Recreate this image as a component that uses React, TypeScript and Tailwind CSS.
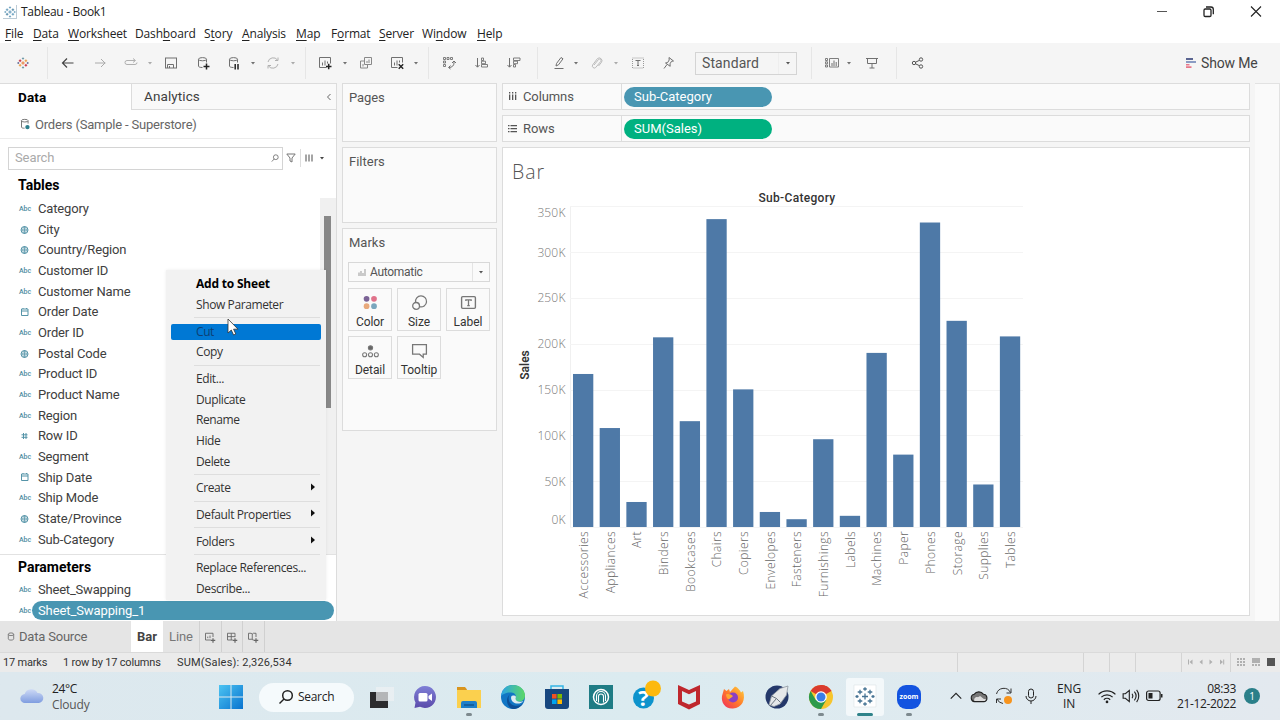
import type { ReactNode } from "react"
import { clsx } from "clsx"

const fields = [
  { type: "abc", name: "Category" },
  { type: "geo", name: "City" },
  { type: "geo", name: "Country/Region" },
  { type: "abc", name: "Customer ID" },
  { type: "abc", name: "Customer Name" },
  { type: "date", name: "Order Date" },
  { type: "abc", name: "Order ID" },
  { type: "geo", name: "Postal Code" },
  { type: "abc", name: "Product ID" },
  { type: "abc", name: "Product Name" },
  { type: "abc", name: "Region" },
  { type: "num", name: "Row ID" },
  { type: "abc", name: "Segment" },
  { type: "date", name: "Ship Date" },
  { type: "abc", name: "Ship Mode" },
  { type: "geo", name: "State/Province" },
  { type: "abc", name: "Sub-Category" },
]

// sales in thousands
const sales = [
  { name: "Accessories", value: 167 },
  { name: "Appliances", value: 108 },
  { name: "Art", value: 27.3 },
  { name: "Binders", value: 207 },
  { name: "Bookcases", value: 115.5 },
  { name: "Chairs", value: 336 },
  { name: "Copiers", value: 150.2 },
  { name: "Envelopes", value: 16.4 },
  { name: "Fasteners", value: 8.5 },
  { name: "Furnishings", value: 95.8 },
  { name: "Labels", value: 12.2 },
  { name: "Machines", value: 190 },
  { name: "Paper", value: 79 },
  { name: "Phones", value: 332.3 },
  { name: "Storage", value: 225 },
  { name: "Supplies", value: 46.4 },
  { name: "Tables", value: 208 },
]

interface MenuEntry {
  label: string
  bold?: boolean
  active?: boolean
  submenu?: boolean
  divider?: boolean
}

const contextMenu: MenuEntry[] = [
  { label: "Add to Sheet", bold: true },
  { label: "Show Parameter", divider: true },
  { label: "Cut", active: true },
  { label: "Copy", divider: true },
  { label: "Edit..." },
  { label: "Duplicate" },
  { label: "Rename" },
  { label: "Hide" },
  { label: "Delete", divider: true },
  { label: "Create", submenu: true, divider: true },
  { label: "Default Properties", submenu: true, divider: true },
  { label: "Folders", submenu: true, divider: true },
  { label: "Replace References..." },
  { label: "Describe..." },
]

const menuBar = [
  { pre: "", key: "F", post: "ile", width: "w-[28px]" },
  { pre: "", key: "D", post: "ata", width: "w-[35px]" },
  { pre: "", key: "W", post: "orksheet", width: "w-[67px]" },
  { pre: "Dash", key: "b", post: "oard", width: "w-[69px]" },
  { pre: "S", key: "t", post: "ory", width: "w-[38px]" },
  { pre: "", key: "A", post: "nalysis", width: "w-[54px]" },
  { pre: "", key: "M", post: "ap", width: "w-[35px]" },
  { pre: "F", key: "o", post: "rmat", width: "w-[48px]" },
  { pre: "", key: "S", post: "erver", width: "w-[43px]" },
  { pre: "Wi", key: "n", post: "dow", width: "w-[55px]" },
  { pre: "", key: "H", post: "elp", width: "w-[40px]" },
]

function Icon({ children, className }: { children: ReactNode; className?: string }) {
  return (
    <svg viewBox="0 0 16 16" fill="none" stroke="currentColor" className={clsx("shrink-0", className ?? "size-4")}>
      {children}
    </svg>
  )
}

function Caret({ className }: { className?: string }) {
  return (
    <svg viewBox="0 0 6 6" className={clsx("size-1.5 shrink-0", className)}>
      <path d="M1 2h4L3 4.4z" fill="currentColor" />
    </svg>
  )
}

function Separator({ className }: { className?: string }) {
  return <div className={clsx("w-px h-8 bg-[#e6e6e6] shrink-0", className)} />
}

const plus = (x: number, y: number, r: number) => `M${x - r} ${y}h${r * 2}M${x} ${y - r}v${r * 2}`

function TableauMark({ className, mono }: { className?: string; mono?: boolean }) {
  return (
    <svg viewBox="0 0 24 24" fill="none" strokeWidth={mono ? 1.7 : 1.9} className={clsx("shrink-0", className)}>
      <path d={plus(12, 12, 3.4)} stroke={mono ? "#4d8bb3" : "#e8762c"} />
      <path d={plus(6.2, 7.5, 2.6) + plus(17.8, 16.5, 2.6)} stroke={mono ? "#5a96b8" : "#c7243a"} />
      <path d={plus(17.8, 7.5, 2.6) + plus(6.2, 16.5, 2.6)} stroke={mono ? "#4680a0" : "#eb9a3c"} />
      <path d={plus(12, 3, 2.2) + plus(12, 21, 2.2)} stroke={mono ? "#6b9fbd" : "#7099a6"} />
      <path d={plus(2.6, 12, 1.8) + plus(21.4, 12, 1.8)} stroke={mono ? "#6b9fbd" : "#5b6591"} />
    </svg>
  )
}

function TitleBar() {
  return (
    <div className="flex items-center h-6 bg-white text-[#222] shrink-0">
      <div className="ml-[3px] size-[14px] border-r border-b border-[#bccbd6] flex items-center justify-center">
        <TableauMark mono className="size-3" />
      </div>
      <span className="ml-[4px] text-[12px] tracking-[-0.3px]">Tableau - Book1</span>
      <div className="ml-auto flex items-center gap-[31px] mr-[16px]">
        <Icon className="size-4 text-[#555]"><path d="M3 7.500h10" /></Icon>
        <Icon className="size-4 text-[#222]">
          <rect x="3" y="5" width="7" height="7.500" rx="1.200" strokeWidth="1.300" />
          <path d="M5 3h5a2.300 2.300 0 0 1 2.300 2.300v5" strokeWidth="1.300" />
        </Icon>
        <Icon className="size-4 text-[#222]"><path d="m3 2.500 10 10M13 2.500 3 12.500" strokeWidth="1.100" /></Icon>
      </div>
    </div>
  )
}

function MenuBar() {
  return (
    <div className="flex items-center h-[19px] pl-[5px] bg-white text-[12px] text-[#222] shrink-0 whitespace-nowrap">
      {menuBar.map((m) => (
        <span key={m.pre + m.key + m.post} className={clsx("tracking-[-0.15px]", m.width)}>
          {m.pre}
          <span className="underline underline-offset-2">{m.key}</span>
          {m.post}
        </span>
      ))}
    </div>
  )
}

function Toolbar() {
  return (
    <div className="flex items-center h-10 bg-[#f5f5f5] text-[#707070] pl-[15px] shrink-0">
      <TableauMark className="size-4 p-[2px]" />
      <Separator className="ml-4" />
      <Icon className="size-4 ml-3 text-[#444]"><path d="M2.500 8h11M7 3.500 2.500 8l4.500 4.500" strokeWidth="1.200" /></Icon>
      <Icon className="size-4 ml-4 text-[#aaa]"><path d="M3 8h10.500M9 4l4 4-4 4" /></Icon>
      <Icon className="size-4 ml-[15px] text-[#b0b0b0]"><path d="M12 9.500H4a2 2 0 0 1-2-2 2 2 0 0 1 2-2h8M10 3.500l2.500 2L10 7.500M12 9.500a2 2 0 0 0 2-2" /></Icon>
      <Caret className="ml-2 text-[#aaa]" />
      <Icon className="size-4 ml-[10px]">
        <rect x="2.500" y="3" width="11" height="10" />
        <path d="M4.500 13v-3.500h6V13M6.500 11v2" />
      </Icon>
      <Icon className="size-4 ml-4">
        <path d="M3.500 4.500v6.500c0 1 1.500 1.500 4 1.500M11.500 4.500v3" />
        <ellipse cx="7.500" cy="4.200" rx="4" ry="1.600" />
        <path d="M8.500 11.500h6M11.500 8.500v6" stroke="#222" strokeWidth="1.500" />
      </Icon>
      <Icon className="size-4 ml-[15px]">
        <path d="M3.500 4.500v6.500c0 1 1.500 1.500 4 1.500M11.500 4.500v3" />
        <ellipse cx="7.500" cy="4.200" rx="4" ry="1.600" />
        <path d="M9.200 9v5.500M12 9v5.500" stroke="#222" strokeWidth="1.500" />
      </Icon>
      <Caret className="ml-2" />
      <Icon className="size-4 ml-[9px] text-[#b0b0b0]"><path d="M3 7a5.300 5.300 0 0 1 9.500-2M13 9a5.300 5.300 0 0 1-9.500 2M13 2.500V5.500h-3M3 13.500v-3h3" /></Icon>
      <Caret className="ml-[9px] text-[#aaa]" />
      <Separator className="ml-[9px]" />
      <Icon className="size-4 ml-[11px]">
        <path d="M9.500 12.500h-7v-10h11v6" />
        <path d="M5.500 10.500v-3M8 10.500v-5M10.500 8.500v-2" />
        <path d="M9 11.500h5.500M11.700 8.700v5.500" stroke="#222" strokeWidth="1.500" />
      </Icon>
      <Caret className="ml-[9px]" />
      <Icon className="size-4 ml-[10px] text-[#888]">
        <path d="M6.500 2.500h7v7h-7zM9 8V6M11 8V4.500M6.500 6h-4v7h7V9.500M5 11.500V9" />
      </Icon>
      <Icon className="size-4 ml-[15px]">
        <path d="M8.500 12.500h-6v-10h11v5" />
        <path d="M5.500 10.500v-3M8 10.500v-5M10.500 7.500v-2" />
        <path d="m9.700 9.300 4.500 4.500M14.200 9.300l-4.500 4.500" stroke="#222" strokeWidth="1.400" />
      </Icon>
      <Caret className="ml-2" />
      <Separator className="ml-[9px]" />
      <Icon className="size-4 ml-3">
        <path d="M2.500 2.500h2v2h-2zM6 2.500h2v2H6zM9.500 2.500h2v2h-2zM2.500 6h2v2h-2zM2.500 9.500h2v2h-2z" strokeWidth=".9" />
        <path d="M13 6.500v1.500c0 2.500-2 4.500-5 4.500M11 8l2-2 2 2M9.500 10.500l-2 2 2 1.500" />
      </Icon>
      <Icon className="size-4 ml-[17px]">
        <path d="M3.500 3v9M1.500 10l2 2.200 2-2.200" />
        <path d="M7.500 3h2v2.500h-2zM7.500 6.200h4v2.500h-4zM7.500 9.500h6v2.500h-6z" strokeWidth=".9" />
      </Icon>
      <Icon className="size-4 ml-4">
        <path d="M3.500 3v9M1.500 10l2 2.200 2-2.200" />
        <path d="M7.500 3h6.500v2.500h-6.500zM7.500 6.200h4v2.500h-4zM7.500 9.500h2v2.500h-2z" strokeWidth=".9" />
      </Icon>
      <Separator className="ml-[15px]" />
      <Icon className="size-4 ml-[13px]"><path d="M5 11l.5-2.500 4.500-6 2 1.300-4.500 6zM3.500 13.500h9" /></Icon>
      <Caret className="ml-1.5" />
      <Icon className="size-4 ml-[10px] text-[#bbb]"><path d="m5 10 4.500-5.500a1.500 1.500 0 0 1 2.200 2l-5 6a2 2 0 0 1-3-2.600L8.500 3.500a2.800 2.800 0 0 1 4 3.800L9.500 11" /></Icon>
      <Caret className="ml-2 text-[#aaa]" />
      <Icon className="size-4 ml-[11px]">
        <rect x="2.500" y="3" width="11" height="10" strokeDasharray="1 1" stroke="#999" />
        <path d="M5.500 5.500h5M8 5.500v5M7 10.500h2" />
      </Icon>
      <Icon className="size-4 ml-[14px]"><path d="M9 2.500l4.500 3.500-2 .3-1.500 2.500.2 2.500L5.500 8l2.200-.5L9.200 5zM7 9.500l-3 4" /></Icon>
      <div className="ml-[19px] w-[102px] h-[23px] border border-[#d4d4d4] flex items-center text-[#555] shrink-0">
        <span className="flex-1 pl-[6px] text-[14px] tracking-[0.1px] font-[Roboto]">Standard</span>
        <div className="w-[18px] h-full border-l border-[#eee] flex items-center justify-center">
          <Caret />
        </div>
      </div>
      <Separator className="ml-[14px]" />
      <Icon className="size-4 ml-3">
        <path d="M5.500 3.500h9v8.500h-9zM1.500 3.500h2v2h-2zM1.500 6.800h2v2h-2zM1.500 10h2v2h-2z" strokeWidth=".9" />
        <path d="M8 11V8M10 11V5.500M12.200 11V7" />
      </Icon>
      <Caret className="ml-1.5" />
      <Icon className="size-4 ml-3"><path d="M2 3.500h12M3.500 3.500v5h9v-5M8 8.500v4.500M5.500 13h5" /></Icon>
      <Separator className="ml-4" />
      <Icon className="size-4 ml-[13px] text-[#555]">
        <circle cx="4" cy="8" r="1.700" />
        <circle cx="11" cy="4.500" r="1.700" />
        <circle cx="11" cy="11.500" r="1.700" />
        <path d="m5.500 7.200 4-1.900M5.500 8.800l4 1.900" />
      </Icon>
      <svg viewBox="0 0 10 10" className="ml-[260px] size-[10px] shrink-0">
        <path d="M0 0h7v2H0z" fill="#5b6591" />
        <path d="M0 3h10v2H0z" fill="#8a9cc4" />
        <path d="M0 6h3.500v1.500H0zM0 8.300h5.500V10H0z" fill="#e8788a" />
      </svg>
      <span className="ml-[5px] text-[14px] tracking-[-0.15px] text-[#444] font-[Roboto] whitespace-nowrap">Show Me</span>
    </div>
  )
}

function FieldIcon({ type }: { type: string }) {
  if (type === "abc") {
    return <span className="w-4 pt-px text-center text-[7px] font-medium text-[#4d8ca0] font-[Roboto]">Abc</span>
  }
  return (
    <svg viewBox="0 0 16 16" fill="none" stroke="#5594a8" className="size-4 shrink-0">
      {type === "geo" && (
        <>
          <circle cx="7.500" cy="8" r="3.500" />
          <path d="M4 8h7M7.500 4.500v7" strokeWidth=".8" />
          <ellipse cx="7.500" cy="8" rx="1.700" ry="3.500" strokeWidth=".7" />
        </>
      )}
      {type === "date" && <path d="M4.500 5H11v6.500H4.500zM4.500 7H11M6 4v1M9.500 4v1" />}
      {type === "num" && <path d="M6.500 5v6M9 5v6M4.500 6.800h6M4.500 9.300h6" />}
    </svg>
  )
}

function DataPane() {
  return (
    <aside className="w-[337px] shrink-0 bg-white border-r border-t border-[#dcdcdc] flex flex-col font-[Roboto] text-[#404040]">
      <div className="flex h-[26px] shrink-0">
        <div className="w-[131px] pl-[18px] flex items-center text-[13.500px] tracking-[0.15px] font-bold text-black">Data</div>
        <div className="flex-1 pl-3 flex items-center bg-[#f9f9f9] border-l border-b border-[#dcdcdc]">
          <span className="text-[13.500px] tracking-[0.1px]">Analytics</span>
          <svg viewBox="0 0 8 8" fill="none" stroke="#666" className="ml-auto mr-[3px] size-2">
            <path d="M5.500 1 2.500 4l3 3" />
          </svg>
        </div>
      </div>
      <div className="flex items-center h-[29px] pl-[18px] border-b border-[#ececec] text-[#666] shrink-0">
        <Icon className="size-3.5">
          <path d="M4 4.500v7c0 1 1.500 1.300 3.500 1.300M11.500 4.500v3" />
          <ellipse cx="7.700" cy="4.200" rx="3.800" ry="1.500" />
          <circle cx="10.800" cy="11.500" r="2.500" fill="#2d7f8c" stroke="none" />
        </Icon>
        <span className="ml-[3px] pt-px text-[13px] tracking-[-0.2px]">Orders (Sample - Superstore)</span>
      </div>
      <div className="flex items-center h-[38px] pl-2 shrink-0">
        <div className="w-[275px] h-[23px] border border-[#d4d4d4] flex items-center pl-1.5 pr-0.5">
          <span className="text-[13px] tracking-[-0.1px] text-[#aaa]">Search</span>
          <svg viewBox="0 0 10 10" fill="none" stroke="#666" className="ml-auto mr-px size-2">
            <circle cx="6" cy="4" r="3" />
            <path d="M4 6.200 1 9.500" />
          </svg>
        </div>
        <svg viewBox="0 0 10 10" fill="none" stroke="#777" className="ml-[3px] size-[10px]">
          <path d="M.8 1h8.400L6 5v4L4 8V5z" />
        </svg>
        <div className="ml-1 w-px h-[18px] bg-[#ddd]" />
        <svg viewBox="0 0 9 8" className="ml-1 w-[9px] h-2">
          <path d="M0 .5h2v7H0zM3 .5h2v7H3zM6 .5h2v7H6z" fill="#a5a5a5" />
        </svg>
        <Caret className="ml-[5px] text-[#444]" />
      </div>
      <div className="flex items-center h-[17px] pl-[18px] text-[14px] font-bold text-black shrink-0">Tables</div>
      <div className="flex h-[360px] shrink-0">
        <ul className="flex-1 pt-[4.600px]">
          {fields.map((f) => (
            <li key={f.name} className="flex items-center h-[20.660px] pl-[17px]">
              <FieldIcon type={f.type} />
              <span className="ml-[5px] text-[13px] tracking-[-0.15px]">{f.name}</span>
            </li>
          ))}
        </ul>
        <div className="mt-1 w-4 bg-[#f0f0f0] pt-[18px] pl-1">
          <div className="w-[7px] h-[192px] bg-[#888]" />
        </div>
      </div>
      <div className="border-t border-[#e2e2e2] flex-1">
        <div className="flex items-center h-6 pl-[18px] text-[14px] font-bold text-black">Parameters</div>
        <div className="flex items-center h-[22px] pl-[17px]">
          <FieldIcon type="abc" />
          <span className="ml-[5px] text-[13px] tracking-[-0.2px]">Sheet_Swapping</span>
        </div>
        <div className="flex items-center h-[19px] pl-[17px] pr-0.5">
          <FieldIcon type="abc" />
          <div className="-ml-px flex-1 h-[19px] rounded-full bg-[#4996b2] flex items-center pl-1.5 text-[13px] tracking-[-0.1px] text-white">
            Sheet_Swapping_1
          </div>
        </div>
      </div>
    </aside>
  )
}

function ContextMenu() {
  return (
    <div className="absolute left-[166px] top-[270px] w-[160px] h-[330px] bg-[#f2f2f2] pt-[4px] text-[12px] text-[#333] shadow-[0_0_3px_rgba(0,0,0,0.08)]">
      {contextMenu.map((m) => (
        <div key={m.label}>
          <div className="flex items-center h-[20.660px] pl-[5px] pr-[5px]">
            <div
              className={clsx(
                "flex items-center w-full h-4 pl-[25px] pr-[5px] rounded-[2px] whitespace-nowrap",
                m.bold ? "font-bold text-black tracking-[-0.2px]" : "tracking-[-0.400px]",
                m.active && "bg-[#0078d4] text-[#0d3f73]"
              )}
            >
              <span>{m.label}</span>
              {m.submenu && (
                <svg viewBox="0 0 6 8" className="ml-auto mb-[3px] w-1.5 h-2">
                  <path d="M1 .5v7L5 4z" fill="#111" />
                </svg>
              )}
            </div>
          </div>
          {m.divider && (
            <div className="h-[6px] pt-[2px] pl-7 pr-1.5">
              <div className="h-px bg-[#dedede]" />
            </div>
          )}
        </div>
      ))}
    </div>
  )
}

function MarkButton({ label, children }: { label: string; children: ReactNode }) {
  return (
    <div className="h-[43px] border border-[#dcdcdc] flex flex-col items-center pt-[5px] text-[#777]">
      <Icon className="size-[17px]">{children}</Icon>
      <span className="mt-[3px] text-[12px] leading-[16px] tracking-[-0.05px] text-[#333]">{label}</span>
    </div>
  )
}

function Shelves() {
  return (
    <div className="w-[155px] ml-[5px] shrink-0 flex flex-col gap-[5px] font-[Roboto] text-[13px] text-[#555]">
      <section className="h-[59px] border border-[#dcdcdc] bg-[#fafafa] pl-1.5 pt-[5px] leading-[18px] tracking-[-0.1px]">Pages</section>
      <section className="h-[76px] border border-[#dcdcdc] bg-[#fafafa] pl-1.5 pt-[5px] leading-[18px]">Filters</section>
      <section className="h-[203px] border border-[#dcdcdc] bg-[#fafafa] pl-[5px] pt-[5px] leading-[18px]">
        <div className="pl-px">Marks</div>
        <div className="mt-[10px] w-[142px] h-5 border border-[#d8d8d8] flex items-center text-[12px]">
          <svg viewBox="0 0 8 8" fill="none" stroke="#999" className="ml-[9px] size-2">
            <path d="M1 8V4.500M3 8V3M5 8V5M7 8V1" />
          </svg>
          <span className="ml-1 tracking-[-0.3px]">Automatic</span>
          <div className="ml-auto w-[17px] h-full border-l border-[#e4e4e4] flex items-center justify-center">
            <Caret />
          </div>
        </div>
        <div className="mt-[6px] grid grid-cols-[44px_44px_44px] gap-[5px]">
          <MarkButton label="Color">
            <g stroke="none">
              <circle cx="4.300" cy="4.500" r="2.700" fill="#7b6396" />
              <circle cx="11.300" cy="4.500" r="2.700" fill="#e0728a" />
              <circle cx="4.300" cy="11.500" r="2.700" fill="#e8a97c" />
              <circle cx="11.300" cy="11.500" r="2.700" fill="#7aa6bd" />
            </g>
          </MarkButton>
          <MarkButton label="Size">
            <path d="M4.300 7.800a5.200 5.200 0 1 1 3.900 4.200" strokeWidth="1.200" />
            <circle cx="4.800" cy="11.200" r="3.200" strokeWidth="1.200" />
          </MarkButton>
          <MarkButton label="Label">
            <rect x="1.500" y="2.500" width="13" height="11" rx="1" strokeWidth="1.300" />
            <path d="M5.500 6.500V5.500h5v1M8 5.500v5.500M6.800 11h2.400" strokeWidth="1.200" />
          </MarkButton>
          <MarkButton label="Detail">
            <circle cx="8" cy="5.500" r="2" fill="#666" />
            <circle cx="2.500" cy="12" r="1.900" />
            <circle cx="8" cy="12" r="1.900" />
            <circle cx="13.500" cy="12" r="1.900" />
          </MarkButton>
          <MarkButton label="Tooltip">
            <path d="M1.500 2.500h13v9h-3V14.500L8 11.500H1.500z" strokeWidth="1.200" />
          </MarkButton>
        </div>
      </section>
    </div>
  )
}

function Shelf({ icon, label, pill, color }: { icon: ReactNode; label: string; pill: string; color: string }) {
  return (
    <div className="flex h-[27px] border border-[#dcdcdc] bg-[#fafafa] text-[13px] text-[#555]">
      <div className="w-[119px] flex items-center pl-[5px] border-r border-[#dcdcdc]">
        <svg viewBox="0 0 9 9" className="size-[9px] text-[#555]">{icon}</svg>
        <span className="ml-[6px] tracking-[-0.1px]">{label}</span>
      </div>
      <div className="flex items-center pl-[2px]">
        <div className={clsx("w-[148px] h-5 rounded-full flex items-center pl-[10px] text-white", color)}>{pill}</div>
      </div>
    </div>
  )
}

const baseline = 379
const perK = 0.9163
const pitch = 26.68

function BarChart() {
  const ticks = [350, 300, 250, 200, 150, 100, 50, 0]
  return (
    <svg viewBox="0 0 746 467" className="w-[746px] h-[467px]">
      <text x="9" y="31" fontSize="19.500" fill="#555" fontWeight="300" letterSpacing="1" className="font-[Open_Sans]">Bar</text>
      <text x="294" y="54" textAnchor="middle" fontSize="12" fontWeight="500" fill="#333" letterSpacing=".3">Sub-Category</text>
      <text transform="translate(26 217) rotate(-90)" textAnchor="middle" fontSize="12" fontWeight="600" fill="#333">Sales</text>
      <path d="M67.500 59v320" stroke="#f0f0f0" />
      {ticks.map((t) => {
        const y = baseline - t * perK
        const labelY = t === 350 ? y + 11 : t === 0 ? y - 3.5 : y + 4.5
        return (
          <g key={t}>
            <path d={`M67 ${Math.round(y) + 0.5}h453`} stroke="#f4f4f4" />
            <text x="62.500" y={labelY} textAnchor="end" fontSize="12" fill="#777" fontWeight="300" letterSpacing=".15" className="font-[Open_Sans]">{t}K</text>
          </g>
        )
      })}
      {sales.map((s, i) => {
        const x = 70 + i * pitch
        return (
          <g key={s.name}>
            <rect x={x} y={baseline - s.value * perK} width="20.300" height={s.value * perK} fill="#4e79a7" />
            <text
              transform={`translate(${x + 15} ${baseline + 4}) rotate(-90)`}
              textAnchor="end"
              fontSize="12"
              fontWeight="300"
              fill="#666"
              letterSpacing=".4"
              className="font-[Open_Sans]"
            >
              {s.name}
            </text>
          </g>
        )
      })}
    </svg>
  )
}

function Worksheet() {
  return (
    <main className="ml-[5px] w-[748px] shrink-0 flex flex-col gap-[5px] font-[Roboto]">
      <Shelf
        label="Columns"
        pill="Sub-Category"
        color="bg-[#4996b2]"
        icon={<path d="M1 0h1.300v1.500H1zM4 0h1.300v1.500H4zM7 0h1.300v1.500H7zM1 2.500h1.300V8H1zM4 2.500h1.300V8H4zM7 2.500h1.300V8H7z" fill="currentColor" />}
      />
      <Shelf
        label="Rows"
        pill="SUM(Sales)"
        color="bg-[#00b180]"
        icon={<path d="M0 1h1.500v1.200H0zM2.500 1H9v1.200H2.500zM0 4h1.500v1.200H0zM2.500 4H9v1.200H2.500zM0 7h1.500v1.200H0zM2.500 7H9v1.200H2.500z" fill="currentColor" />}
      />
      <div className="h-[469px] bg-white border border-[#dcdcdc]">
        <BarChart />
      </div>
    </main>
  )
}

function SheetTabs() {
  const cell = "w-[21.500px] h-full border-r border-[#d0d0d0] flex items-center justify-center"
  return (
    <div className="flex h-[31px] bg-[#e5e5e5] shrink-0 font-[Roboto] text-[13px] text-[#666]">
      <div className="w-[131px] flex items-center pl-[7px]">
        <svg viewBox="0 0 8 10" fill="none" stroke="#777" className="w-2 h-[9px]">
          <path d="M1 2.500v5c0 1 1.200 1.500 3 1.500s3-.5 3-1.500v-5" />
          <ellipse cx="4" cy="2.500" rx="3" ry="1.500" />
        </svg>
        <span className="ml-1 pt-px tracking-[-0.2px]">Data Source</span>
      </div>
      <div className="w-8 bg-white flex items-center justify-center font-bold text-[#444] text-[13px]">Bar</div>
      <div className="w-[37px] border-r border-[#d0d0d0] flex items-center pl-1.5 pt-px tracking-[-0.1px] text-[#777]">Line</div>
      <div className={cell}>
        <Icon className="size-3">
          <path d="M9 12H2V3h10v5M5 9.500V7.500M8 9.500V6" strokeWidth="1.200" />
          <path d="M9 12.500h6M12 9.500v6" strokeWidth="1.600" />
        </Icon>
      </div>
      <div className={cell}>
        <Icon className="size-3">
          <path d="M9 12H2V3h10v5M7 3v9M2 7.500h10" strokeWidth="1.200" />
          <path d="M9 12.500h6M12 9.500v6" strokeWidth="1.600" />
        </Icon>
      </div>
      <div className={cell}>
        <Icon className="size-3">
          <path d="M9 12H8l-1.500-1H2V3h3.500L7 4l1.500-1H12v5M7 4v7" strokeWidth="1.200" />
          <path d="M9 12.500h6M12 9.500v6" strokeWidth="1.600" />
        </Icon>
      </div>
    </div>
  )
}

function StatusBar() {
  return (
    <div className="flex items-center h-5 bg-[#ebebeb] border-t border-[#dadada] shrink-0 font-[Roboto] text-[11px] text-[#333] whitespace-nowrap">
      <span className="ml-[3px] w-[60px] pt-px tracking-[-0.2px]">17 marks</span>
      <span className="w-[114px] pt-px tracking-[-0.18px]">1 row by 17 columns</span>
      <span className="w-[780px] pt-px tracking-[0.2px]">SUM(Sales): 2,326,534</span>
      <div className="w-[126px] h-full border-l border-[#d4d4d4]" />
      <div className="w-[26px] h-full border-l border-[#d4d4d4]" />
      <div className="w-[26px] h-full border-l border-[#d4d4d4]" />
      <div className="w-[46px] h-full border-l border-[#d4d4d4]" />
      <div className="w-[49px] h-full border-l border-[#d4d4d4] flex items-center pl-[5px] pb-[2px]">
        <svg viewBox="0 0 38 6" className="w-[38px] h-1.5" fill="#b0b0b0">
          <path d="M1 .5h1v5H1zM5.500.5v5L2.500 3zM15.500.5v5l-3-2.500zM22.500.5v5l3-2.500zM33 .5v5L36 3zM36.200.5h1v5h-1z" />
        </svg>
      </div>
      <div className="flex-1 h-full border-l border-[#d4d4d4] flex items-center pl-1.5 pb-[2px] gap-[7px]">
        <svg viewBox="0 0 8 8" className="size-2" fill="#b0b0b0">
          <path d="M0 0h2v2H0zM3 0h2v2H3zM6 0h2v2H6zM0 3h2v2H0zM3 3h2v2H3zM6 3h2v2H6zM0 6h2v2H0zM3 6h2v2H3zM6 6h2v2H6z" />
        </svg>
        <svg viewBox="0 0 8 8" className="size-2" fill="#b0b0b0">
          <path d="M0 0h8v5H0zM0 6h2v2H0zM3 6h2v2H3zM6 6h2v2H6z" />
        </svg>
        <div className="size-2 bg-[#555]" />
      </div>
    </div>
  )
}

function AppSlot({ children, running, active }: { children: ReactNode; running?: boolean; active?: boolean }) {
  return (
    <div className="w-11 h-full flex items-center justify-center">
      <div className={clsx("w-[38px] h-[38px] flex flex-col items-center pt-[7px] rounded-[3px]", active && "bg-[#f3f8fa]")}>
        <svg viewBox="0 0 24 24" className="size-6 shrink-0 overflow-visible">{children}</svg>
        {running && <div className="mt-[4px] w-1.5 h-[3px] rounded-full bg-[#7d898e] shrink-0" />}
        {active && <div className="mt-[4px] w-4 h-[3px] rounded-full bg-[#2e8289] shrink-0" />}
      </div>
    </div>
  )
}

function Taskbar() {
  return (
    <div className="flex items-center h-12 shrink-0 bg-linear-to-r from-[#dde8ee] via-[#dbebf0] to-[#e3e9ef] text-[12px] text-[#222]">
      <svg viewBox="0 0 24 16" className="ml-5 w-6 h-4">
        <defs>
          <linearGradient id="cloud" x1="0" y1="0" x2="0" y2="1">
            <stop offset="0" stopColor="#cdd9f5" />
            <stop offset="1" stopColor="#7f9de0" />
          </linearGradient>
        </defs>
        <path d="M5 15a4.500 4.500 0 0 1-.3-9A7 7 0 0 1 17.500 5 5 5 0 0 1 19 15z" fill="url(#cloud)" />
      </svg>
      <div className="ml-2 w-[167px] leading-4 mt-[2px]">
        <div className="tracking-[-0.4px]">24°C</div>
        <div className="text-[#555] tracking-[-0.15px]">Cloudy</div>
      </div>
      <svg viewBox="0 0 24 24" className="mt-[2px] size-6 shrink-0">
        <defs>
          <linearGradient id="win" x1="0" y1="0" x2="1" y2="1">
            <stop offset="0" stopColor="#4cc4f2" />
            <stop offset="1" stopColor="#0873cf" />
          </linearGradient>
        </defs>
        <path d="M0 0h11.500v11.500H0zM12.500 0H24v11.500H12.500zM0 12.500h11.500V24H0zM12.500 12.500H24V24H12.500z" fill="url(#win)" />
      </svg>
      <div className="ml-4 mt-[2px] w-[95px] h-[29px] rounded-full bg-[#f5fafc] flex items-center pl-[19px] shrink-0">
        <svg viewBox="0 0 16 16" fill="none" stroke="#222" strokeWidth="1.500" className="size-4">
          <circle cx="9.500" cy="6.500" r="4.800" />
          <path d="m6 10-4.500 4.500" />
        </svg>
        <span className="ml-1 tracking-[-0.300px]">Search</span>
      </div>
      <div className="ml-[5px] flex h-full shrink-0 pt-px">
        <AppSlot>
          <path d="M1 7h18v16H1z" fill="#2c2c2e" />
          <path d="M7 2h18v14H7z" fill="#eef1f3" opacity=".7" />
        </AppSlot>
        <AppSlot>
          <defs>
            <linearGradient id="chat" x1="0" y1="0" x2="0" y2="1">
              <stop offset="0" stopColor="#7f7fd6" />
              <stop offset="1" stopColor="#5b4bab" />
            </linearGradient>
          </defs>
          <path d="M12 1a11 11 0 1 1-5 20.800L1.500 23l1-5.500A11 11 0 0 1 12 1z" fill="url(#chat)" />
          <rect x="5.500" y="8" width="9" height="8.500" rx="1.500" fill="#fff" />
          <path d="m15.500 11 3.500-2.500v7.500l-3.500-2.500z" fill="#fff" />
        </AppSlot>
        <AppSlot running>
          <path d="M0 2h8l2 2.500V8H0z" fill="#d9951e" />
          <path d="M0 5h24v18H0z" fill="#fbd04e" />
          <path d="M4 18a2 2 0 0 1 2-2h12a2 2 0 0 1 2 2v5H4z" fill="#1f7fc9" />
          <path d="M7 19h10v2H7z" fill="#155f9e" />
        </AppSlot>
        <AppSlot>
          <defs>
            <linearGradient id="edgeTop" x1="0" y1="0" x2="1" y2="0">
              <stop offset="0" stopColor="#2ba3e6" />
              <stop offset="1" stopColor="#5bd865" />
            </linearGradient>
          </defs>
          <circle cx="12" cy="12" r="12" fill="#1176c4" />
          <path d="M0 11C1 4 6 0 12 0c7 0 12 5 12 10.500 0 4-3 6-6 6-4 0-5-2-3.500-3.500 1-1.500.500-5-4-5.500C6 7 1.500 9 0 11z" fill="url(#edgeTop)" />
          <path d="M9 9c-3 4-1 10 4 11.500 4 1 8-.5 9.500-3-3 5-7 6.500-10.500 6.500C7 23 3 15 9 9z" fill="#0c4f97" />
          <path d="M10.500 11c-1.500 3 1 7 5 7.500 3 .3 5-.5 7-2.500-2 1-8 1.500-8-2.500 1-1.500.5-4-4-2.500z" fill="#dcebf1" />
        </AppSlot>
        <AppSlot>
          <path d="M6 5V1h12v4" fill="none" stroke="#35b5e5" strokeWidth="1.500" />
          <path d="M0 4h24v17a3 3 0 0 1-3 3H3a3 3 0 0 1-3-3z" fill="#17477f" />
          <path d="M7 9h4.600v4.600H7z" fill="#f25022" />
          <path d="M12.400 9H17v4.600h-4.600z" fill="#7fba00" />
          <path d="M7 14.400h4.600V19H7z" fill="#00a4ef" />
          <path d="M12.400 14.400H17V19h-4.600z" fill="#ffb900" />
        </AppSlot>
        <AppSlot>
          <path d="M0 0h24v24H0z" fill="#1f7c85" />
          <circle cx="12" cy="12" r="7.500" fill="none" stroke="#fff" strokeWidth="1.500" />
          <path d="M9.500 17.500v-6a2.500 2.500 0 0 1 5 0v6M7.500 16v-5a4.500 4.500 0 0 1 9 0v5" fill="none" stroke="#fff" strokeWidth="1.100" />
        </AppSlot>
        <AppSlot>
          <circle cx="10.500" cy="13" r="10.500" fill="#0d93cc" />
          <text x="10.500" y="21" textAnchor="middle" fontSize="22" fontWeight="700" fill="#fff">?</text>
          <circle cx="20" cy="3.500" r="8" fill="#fdb90f" />
        </AppSlot>
        <AppSlot>
          <path d="M1 0l11 5L23 0v19l-11 5.500L1 19zM5 6v10.500l7 3 7-3V6l-7 3.200z" fill="#bf272d" fillRule="evenodd" />
        </AppSlot>
        <AppSlot>
          <defs>
            <linearGradient id="fox" x1="1" y1="0" x2="0" y2="1">
              <stop offset="0" stopColor="#ffd43c" />
              <stop offset=".5" stopColor="#ff7a2b" />
              <stop offset="1" stopColor="#f0295f" />
            </linearGradient>
          </defs>
          <path d="M3 4l2.500 2L8 4l1 3 5-5.500c3 1 5 4 6 6L22 6c3 9-1 17-10 17.500C4 24 0 17.500 1 11z" fill="url(#fox)" />
          <circle cx="12" cy="12.500" r="5" fill="#8a3fc4" />
          <path d="M5 9.500c3-1 5 0 7 1.500-1 2-3 1.500-4 3.500-2-.5-3-3-3-5z" fill="#ffa52f" />
        </AppSlot>
        <AppSlot>
          <circle cx="12" cy="12" r="11.500" fill="#24386a" />
          <path d="M4 20l2.500-9L15 3.500 23 1l-1.500 9L15 19l-6 2.500z" fill="#e5e8ea" stroke="#8e979f" strokeWidth=".8" />
          <path d="M6.500 11l5 2.500L5 21M11.500 13.500l4 4" fill="none" stroke="#6c7681" />
        </AppSlot>
        <AppSlot running>
          <circle cx="12" cy="12" r="12" fill="#f7c52d" />
          <path d="M12 12 1.600 6A12 12 0 0 1 22.400 6z" fill="#da3b2f" />
          <path d="M12 0a12 12 0 0 1 10.400 6H12z" fill="#da3b2f" />
          <path d="M1.600 6A12 12 0 0 0 12 24l5.200-9H6.800z" fill="#2c9a4b" />
          <circle cx="12" cy="12" r="5.800" fill="#fff" />
          <circle cx="12" cy="12" r="4.500" fill="#3b7de8" />
        </AppSlot>
        <AppSlot active>
          <path d="M1 0h22v22H1z" fill="#fff" stroke="#dce3e6" strokeWidth=".6" />
          <g fill="none" stroke="#467393" strokeWidth="1.300">
            <path d={plus(12, 11.5, 3) + plus(7, 7, 2.3) + plus(17, 7, 2.3) + plus(7, 16, 2.3) + plus(17, 16, 2.3)} />
            <path d={plus(12, 4, 1.8) + plus(12, 19, 1.8) + plus(4, 11.5, 1.6) + plus(20, 11.5, 1.6)} />
          </g>
        </AppSlot>
        <AppSlot running>
          <rect width="24" height="24" rx="9" fill="#1353e0" />
          <text x="12" y="14" textAnchor="middle" fontSize="7" fontWeight="700" fill="#fff">zoom</text>
        </AppSlot>
      </div>
      <div className="ml-[18px] flex items-center shrink-0">
        <Icon className="h-4 w-3.5"><path d="m2 11 6-6 6 6" strokeWidth="1.300" /></Icon>
        <Icon className="ml-[7px] size-[18px]">
          <path d="M4 13a3.300 3.300 0 0 1-.3-6.500A5 5 0 0 1 12 6.500a3.300 3.300 0 0 1 .5 6.500z" fill="#777" stroke="#222" />
          <path d="M4 12.500c-1-2 1-4 3-3.500l2-1 3 2.500 2.500.5-1.500 1.500z" fill="#ddd" stroke="none" />
        </Icon>
        <svg viewBox="0 0 18 18" fill="none" stroke="#333" className="ml-[7px] size-[18px]">
          <path d="M1.500 7a7.500 7.500 0 0 1 14-1.500M16 1.500V6h-4.500M8 16.500A7.500 7.500 0 0 1 2 12M1.500 16v-4H6" />
          <circle cx="13" cy="13" r="4" fill="#f7941d" stroke="none" />
        </svg>
        <Icon className="ml-[10px] size-4">
          <rect x="5.500" y="1" width="5" height="9" rx="2.500" />
          <path d="M3 8a5 5 0 0 0 10 0M8 13v3" />
        </Icon>
        <div className="ml-[15px] w-[30px] text-center leading-[15.500px] tracking-[-0.2px]">
          <div>ENG</div>
          <div>IN</div>
        </div>
        <Icon className="ml-[14px] size-[18px]">
          <path d="M.5 6.500a10.500 10.500 0 0 1 15 0M3 9a7 7 0 0 1 10 0M5.200 11.300a4 4 0 0 1 5.600 0" strokeWidth="1.100" />
          <circle cx="8" cy="13.300" r="1.200" fill="#222" stroke="none" />
        </Icon>
        <Icon className="ml-[6px] size-[18px]">
          <path d="M1 6h2L6.500 3v10L3 10H1zM9 6a3.500 3.500 0 0 1 0 4M11 4.200a6 6 0 0 1 0 7.600M13 2.500a9 9 0 0 1 0 11" />
        </Icon>
        <svg viewBox="0 0 17 12" className="ml-[6px] w-[17px] h-3">
          <rect x=".6" y="1" width="13.500" height="9.500" rx="2" fill="none" stroke="#222" strokeWidth="1.200" />
          <path d="M2.500 3h4v5.500h-4zM15 4h1.500v3.500H15z" fill="#222" />
        </svg>
        <div className="w-[73px] text-right leading-[15.500px] tracking-[-0.35px]">
          <div>08:33</div>
          <div>21-12-2022</div>
        </div>
        <div className="ml-2 size-4 rounded-full bg-[#2a7f89] text-white text-[10px] flex items-center justify-center">1</div>
      </div>
    </div>
  )
}

export default function App() {
  return (
    <div className="relative w-[1280px] h-[720px] overflow-hidden flex flex-col bg-[#f5f5f5] font-[Open_Sans,sans-serif]">
      <TitleBar />
      <MenuBar />
      <Toolbar />
      <div className="flex h-[538px] shrink-0">
        <DataPane />
        <Shelves />
        <Worksheet />
        <div className="ml-[5px] flex-1 bg-[#fafafa] border-t border-r border-[#e2e2e2]" />
      </div>
      <SheetTabs />
      <StatusBar />
      <Taskbar />
      <ContextMenu />
      {/* mouse pointer */}
      <svg viewBox="0 0 12 18" className="absolute left-[227px] top-[318px] w-[12px] h-[18px]">
        <path d="M1 1v14l3.300-3 2.300 5 2.200-1-2.200-4.800H11z" fill="#fff" stroke="#333" strokeWidth=".8" />
      </svg>
    </div>
  )
}
